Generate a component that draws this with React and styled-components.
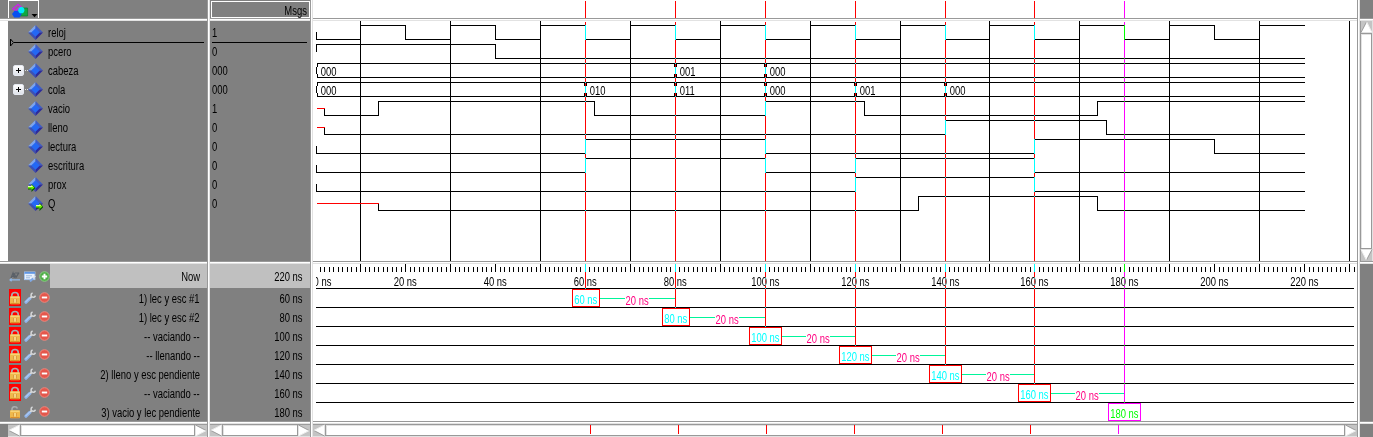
import React from "react";
import styled, { createGlobalStyle, css } from "styled-components";

const GlobalStyle = createGlobalStyle`
  body { margin: 0; background: #fff; }
  * { box-sizing: border-box; }
`;

const FONT = '"Liberation Sans", Arial, sans-serif';
const CONDENSE = 0.755;
const GRAY = "#808080";

/* ---------- layout ---------- */

const Window = styled.main`
  display: grid;
  grid-template-columns: 207px 3px 100px 3px 1044px 3px 13px;
  grid-template-rows: 18px 3px 240px 3px 157px 3px 13px;
  width: 1373px;
  height: 437px;
  overflow: hidden;
  background: #fff;
  color: #000;
  font: 12.5px/19px ${FONT};
  white-space: pre;
`;

const Cell = styled.div`
  grid-column: ${(p) => p.$col};
  grid-row: ${(p) => p.$row};
  min-width: 0;
  min-height: 0;
  overflow: hidden;
  background: ${(p) => (p.$white ? "#fff" : GRAY)};
`;

const sash = (dir) =>
  `linear-gradient(${dir}, #999 0 1px, #fff 1px 2px, #e2e2e2 2px 3px)`;

const HorizontalSash = styled.div`
  grid-column: 1 / -1;
  grid-row: ${(p) => p.$row};
  background: ${sash("to bottom")};
`;

const VerticalSash = styled.div`
  grid-column: ${(p) => p.$col};
  grid-row: 1 / -1;
  background: ${sash("to right")};
`;

const Drawing = styled.svg`
  display: block;
  text { font: 12.5px ${FONT}; }
`;

const Narrow = styled.span`
  display: inline-block;
  transform: scaleX(${CONDENSE});
  transform-origin: ${(p) => (p.$right ? "right" : "left")} center;
`;

/* ---------- header ---------- */

const ToolButton = styled.div`
  width: 31px;
  height: 18px;
  margin-left: 8px;
  border: 1px solid #fff;
  border-bottom: 0;
  svg { display: block; }
`;

const MessageHeader = styled.div`
  height: 17px;
  margin: 1px 0 0 1px;
  padding-right: 2px;
  border: 1px solid #fff;
  line-height: 18px;
  text-align: right;
`;

/* ---------- signal names and values ---------- */

const NameList = styled.div`
  height: 100%;
  padding-top: 2px;
  border-left: 8px solid #fff;
`;

const Signal = styled.div`
  display: flex;
  align-items: center;
  height: 19px;
  line-height: 21px;
`;

const SignalGutter = styled.div`
  display: flex;
  align-items: center;
  width: 20px;
  padding-left: 5px;
`;

const SignalName = styled(Narrow)`
  margin-left: 5px;
  padding-top: 1px;
`;

const SignalValue = styled(Narrow)`
  padding-top: 1px;
`;

const Expander = styled.span`
  display: flex;
  width: 11px;
  height: 11px;
  border: 1px solid #e4e8f0;
  border-radius: 2px;
  background: linear-gradient(#fff, #dfe3ea);
`;

const Connector = styled.span`
  width: 5px;
  height: 1px;
  margin-left: 1px;
  background: repeating-linear-gradient(to right, #ddd 0 1px, transparent 1px 2px);
`;

const ValueList = styled.div`
  padding: 2px 0 0 2px;
`;

const InsertMarker = styled.div`
  height: 0;
  position: relative;
  svg { position: absolute; left: ${(p) => p.$left}px; top: -4px; }
`;

/* ---------- cursor names and times ---------- */

const NowRow = styled.div`
  display: flex;
  align-items: center;
  height: 24px;
`;

const NowLabel = styled.span`
  flex: 1;
  height: 24px;
  padding-right: 7px;
  background: #c0c0c0;
  line-height: 26px;
  text-align: right;
`;

const IconSet = styled.span`
  display: flex;
  align-items: center;
  gap: 3px;
  width: 50px;
  padding-left: 9px;
  svg { flex: none; }
`;

const CursorRow = styled.div`
  display: flex;
  height: 19px;
  line-height: 23px;
`;

const CursorText = styled.span`
  flex: 1;
  padding-right: 7px;
  text-align: right;
`;

const LockCell = styled.span`
  display: flex;
  align-items: center;
  justify-content: center;
  width: 12px;
  height: 17px;
  background: ${(p) => (p.$locked ? "#f00" : "transparent")};
`;

/* ---------- scroll bars ---------- */

const ScrollBar = styled.div`
  display: flex;
  flex-direction: ${(p) => (p.$vertical ? "column" : "row")};
  height: ${(p) => (p.$vertical ? "240px" : "13px")};
  margin-left: ${(p) => p.$indent || 0}px;
  background: #e2e2e2;
  svg { flex: none; display: block; }
`;

const Thumb = styled.div`
  flex: 1;
  background: #fff;
  border: 1px solid #999;
  box-shadow: inset 1px 1px #e2e2e2;
  ${(p) =>
    p.$vertical
      ? css`
          margin-right: 1px;
        `
      : css`
          margin-bottom: 1px;
        `}
`;

/* ---------- data ---------- */

const SIGNALS = [
  { name: "reloj", value: "1" },
  { name: "pcero", value: "0" },
  { name: "cabeza", value: "000", bus: true },
  { name: "cola", value: "000", bus: true },
  { name: "vacio", value: "1" },
  { name: "lleno", value: "0" },
  { name: "lectura", value: "0" },
  { name: "escritura", value: "0" },
  { name: "prox", value: "0", port: "in" },
  { name: "Q", value: "0", port: "out" },
];

const CURSORS = [
  { t: 60, name: "1) lec y esc #1" },
  { t: 80, name: "1) lec y esc #2" },
  { t: 100, name: "-- vaciando --" },
  { t: 120, name: "-- llenando --" },
  { t: 140, name: "2) lleno y esc pendiente" },
  { t: 160, name: "-- vaciando --" },
  { t: 180, name: "3) vacio y lec pendiente", active: true },
];

/* level changes per row: [time, level], level "x" is unknown */
const clock = [[0, 0]];
for (let t = 10; t < 220; t += 10) clock.push([t, (t / 10) % 2]);

const WAVES = [
  [0, clock],
  [1, [[0, 1], [40, 0]]],
  [4, [[0, "x"], [2, 0], [14, 1], [62, 0], [100, 1], [122, 0], [174, 1]]],
  [5, [[0, "x"], [2, 0], [140, 1], [176, 0]]],
  [6, [[0, 0], [60, 1], [100, 0], [160, 1], [200, 0]]],
  [7, [[0, 0], [60, 1], [100, 0], [120, 1], [160, 0]]],
  [8, [[0, 0], [120, 1], [160, 0]]],
  [9, [[0, "x"], [14, 0], [134, 1], [174, 0]]],
];

const BUSES = [
  [2, [[0, "000"], [80, "001"], [100, "000"]]],
  [3, [[0, "000"], [60, "010"], [80, "011"], [100, "000"], [120, "001"], [140, "000"]]],
];

const timeX = (t) => (t === 0 ? 316 : Math.floor(315.8 + 4.4945 * t));
const END_X = timeX(220);

/* ---------- icons ---------- */

function Diamond({ port }) {
  return (
    <svg width="15" height="15" viewBox="0 0 15 15">
      <path d="M7.5 0 0 7.5 7.5 7.5Z" fill="#7da4ee" />
      <path d="M7.5 0 15 7.5H7.5Z" fill="#3f5cc4" />
      <path d="M0 7.5 7.5 15V7.5Z" fill="#3c50b4" />
      <path d="M15 7.5 7.5 15V7.5Z" fill="#2c2a9c" />
      <path d="M7.5 3.2 11.8 7.5 7.5 11.8 3.2 7.5Z" fill="#2468f4" />
      {port && (
        <g transform={port === "in" ? "translate(0 7)" : "translate(8 7)"}>
          <path d="M0 2.5H3.5V0L7.5 4 3.5 8V5.5H0Z" fill="#0a5a00" />
          <path d="M0 2H3.5V.5L6.5 3.5 3.5 6V4.5H0Z" fill="#6cf000" />
          <path d="M0 2H3.5V1L5 2.5 4 3H0Z" fill="#e8ffb0" />
        </g>
      )}
    </svg>
  );
}

const ShapesIcon = () => (
  <svg width="29" height="17" viewBox="9 1 29 17">
    <path d="M13 8.6 18 4.6 20.6 6.6 15.8 10.6Z" fill="#808080" stroke="#c32be0" strokeWidth="1.7" />
    <path d="M23 8H27.6V16H18Z" fill="#10a840" stroke="#0a7a30" strokeWidth=".7" />
    <path d="M12 14 14.5 10.8H19L21.8 14 19.5 17.6H14.2Z" fill="#0850f0" />
    <circle cx="21.3" cy="10.2" r="3.1" fill="#00e8f8" />
    <path d="M31.5 14H37.5L34.5 17.2Z" fill="#000" />
  </svg>
);

const PlusGlyph = () => (
  <svg width="9" height="9" viewBox="0 0 9 9" shapeRendering="crispEdges">
    <path d="M2 4.5H7M4.5 2V7" stroke="#000" />
  </svg>
);

const Lock = ({ open }) => (
  <svg width="12" height="14" viewBox="0 0 12 14">
    <path
      d={open ? "M3 6.5V4.2C3 1.2 7.6 1 8.4 3.6" : "M2.8 6V4.2C2.8 .6 9.2 .6 9.2 4.2V6"}
      fill="none"
      stroke="#a9adb0"
      strokeWidth="1.6"
    />
    <rect x="1" y="5.2" width="10" height="8" rx=".8" fill="#efb84c" />
    <path d="M1.5 6.2H10.5" stroke="#fbe08c" />
    <path d="M1.5 12.6H10.5" stroke="#d98a28" />
    <path d="M4.5 8V11.5M7.5 8V11.5" stroke="#d99a3c" strokeWidth=".9" />
    <path d="M6 8V11.5" stroke="#fbe6a8" strokeWidth="1.2" />
  </svg>
);

const Wrench = () => (
  <svg width="12" height="12" viewBox="0 0 12 12">
    <path d="M2 10.2 5.8 6.4" stroke="#8fb4ea" strokeWidth="3.2" strokeLinecap="round" />
    <path d="M2 9.6 5.4 6.2" stroke="#bcd4f8" strokeWidth="1" strokeLinecap="round" />
    <path d="M6.3 5.8 7.6 4.6" stroke="#dcdcdc" strokeWidth="1.8" />
    <path d="M8.6 .9C6.6 1.6 6.6 4.6 8.4 5.1 9.8 5.5 11.2 4.8 11.3 3.6" fill="none" stroke="#d4d6d8" strokeWidth="1.6" />
  </svg>
);

const RoundBadge = ({ plus }) => (
  <svg width="11" height="11" viewBox="0 0 11 11">
    <circle cx="5.5" cy="5.5" r="4.8" fill={plus ? "#4fae48" : "#e4574c"} stroke={plus ? "#8cd084" : "#f08a80"} strokeWidth=".9" />
    <path d={plus ? "M2.8 5.5H8.2M5.5 2.8V8.2" : "M2.8 5.5H8.2"} stroke="#fff" strokeWidth="1.9" />
  </svg>
);

const SortIcon = () => (
  <svg width="12" height="11" viewBox="0 0 12 11">
    <path d="M2 7.2 4 2 5.4 7.2M5 2 7 6.4 10 1.6M6 2H9.6M2.8 5.4H8" fill="none" stroke="#5a6068" strokeWidth="1.2" />
    <path d="M1 8.9H11M2.6 7.4 1 8.9 2.6 10.3" fill="none" stroke="#8fb7e8" strokeWidth="1.2" />
  </svg>
);

const SheetIcon = () => (
  <svg width="12" height="11" viewBox="0 0 12 11">
    <rect x=".5" y="1" width="10.4" height="7.6" fill="#e8f1fc" stroke="#a8c6ee" />
    <path d="M.5 1.9H11" stroke="#5f96e4" strokeWidth="1.8" />
    <path d="M2 4.8H8M2 6.8H6" stroke="#9db8dc" />
    <path d="M6 10.4 9.2 7.2" stroke="#7fa8e4" strokeWidth="2" />
    <path d="M9 7 11.4 5" stroke="#dfe3e8" strokeWidth="1.6" />
  </svg>
);

function ArrowTip({ dir }) {
  const turn = { left: 0, up: 90, right: 180, down: 270 }[dir];
  const vertical = dir === "up" || dir === "down";
  return (
    <svg
      width={vertical ? 13 : 12}
      height={vertical ? 12 : 13}
      viewBox="0 0 13 13"
      preserveAspectRatio="none"
    >
      <rect width="13" height="13" fill="#c4c4c4" />
      <path d={vertical ? "M.5 0V13" : "M0 .5H13"} stroke="#999" />
      <path d={vertical ? "M12.5 0V13" : "M0 12.5H13"} stroke="#e2e2e2" />
      <g transform={`rotate(${turn} 6.5 6.5)`}>
        <path d="M1 6.5 12.5 1V12Z" fill="#fff" />
        <path d="M1 6.5 12.5 12" stroke="#999" />
        <path d="M1 6.3 12.5 1" stroke="#eee" />
      </g>
    </svg>
  );
}

/* ---------- drawings ---------- */

function Label({ x, y, fill = "#000", children }) {
  return (
    <text transform={`translate(${x} ${y}) scale(${CONDENSE} 1)`} fill={fill} stroke="none">
      {children}
    </text>
  );
}

/* Cursor lines invert whatever they cross. */
function CursorLine({ x, from, to, active }) {
  return (
    <rect
      x={x}
      y={from}
      width="1"
      height={to - from}
      fill={active ? "#0f0" : "#0ff"}
      style={{ mixBlendMode: "difference" }}
    />
  );
}

function wavePath(row, steps) {
  const level = (v) => (v === "x" ? 32 : v ? 25 : 39) + 19 * row + 0.5;
  let known = "";
  let unknown = "";
  steps.forEach(([t, v], i) => {
    const x = timeX(t) + 0.5;
    const next = i + 1 < steps.length ? timeX(steps[i + 1][0]) + 0.5 : END_X + 0.5;
    const y = level(v);
    if (v === "x") {
      unknown += `M${x + 0.5} ${y}H${next}`;
      return;
    }
    const prev = i ? level(steps[i - 1][1]) : level("x");
    known += `M${x} ${Math.min(prev, y) - 0.5}V${Math.max(prev, y) + 0.5}M${x - 0.5} ${y}H${next + 0.5}`;
  });
  return { known, unknown };
}

function Bus({ row, steps }) {
  const top = 63 + 19 * (row - 2);
  const bottom = top + 14;
  return (
    <>
      <path d={`M317 ${top + 0.5}H${END_X + 1}M317 ${bottom + 0.5}H${END_X + 1}`} />
      {steps.map(([t, v]) => {
        const x = timeX(t);
        return (
          <g key={t}>
            <path
              d={
                t === 0
                  ? `M317.5 ${top}V${top + 4}M317.5 ${top + 11}V${top + 15}M316.5 ${top + 4}V${top + 11}`
                  : `M${x - 0.5} ${top}V${top + 4}M${x + 1.5} ${top}V${top + 4}M${x - 0.5} ${top + 11}V${top + 15}M${x + 1.5} ${top + 11}V${top + 15}M${x + 0.5} ${top + 4}V${top + 11}`
              }
            />
            <Label x={x + 4.7} y={top + 13}>{v}</Label>
          </g>
        );
      })}
    </>
  );
}

function HeaderDrawing() {
  return (
    <Drawing width="1044" height="18" viewBox="313 0 1044 18" shapeRendering="crispEdges">
      {CURSORS.map((c) => (
        <rect key={c.t} x={timeX(c.t)} y="1" width="1" height="17" fill={c.active ? "#f0f" : "#f00"} />
      ))}
    </Drawing>
  );
}

function WaveDrawing() {
  const grid = [];
  for (let t = 10; t <= 230; t += 20) grid.push(`M${timeX(t) + 0.5} 21V261`);
  const paths = WAVES.map(([row, steps]) => wavePath(row, steps));
  return (
    <Drawing width="1044" height="240" viewBox="313 21 1044 240" shapeRendering="crispEdges">
      <rect x="313" y="21" width="1044" height="240" fill="#fff" />
      <g fill="none" stroke="#000">
        <path d={grid.join("")} />
        {paths.map((p, i) => <path key={i} d={p.known} />)}
        {BUSES.map(([row, steps]) => <Bus key={row} row={row} steps={steps} />)}
      </g>
      <path d={paths.map((p) => p.unknown).join("")} stroke="#f00" />
      {CURSORS.map((c) => (
        <CursorLine key={c.t} x={timeX(c.t)} from={22} to={261} active={c.active} />
      ))}
    </Drawing>
  );
}

function TimelineDrawing() {
  const ticks = [];
  for (let t = 1; t <= 231; t++) ticks.push(`M${timeX(t) + 0.5} ${t % 10 ? 267 : 264}V272`);
  const labels = [];
  for (let t = 0; t <= 220; t += 20) labels.push(t);
  return (
    <Drawing width="1044" height="157" viewBox="313 264 1044 157" shapeRendering="crispEdges">
      <clipPath id="ruler"><rect x="316" y="264" width="1038" height="157" /></clipPath>
      <rect x="313" y="264" width="1044" height="157" fill="#fff" />
      <path d={ticks.join("")} stroke="#000" />
      <g clipPath="url(#ruler)">
        {labels.map((t) => (
          <Label key={t} x={t ? timeX(t) - (t < 100 ? 11.3 : 13.8) : 313.6} y={286}>{`${t} ns`}</Label>
        ))}
      </g>
      {CURSORS.map((c, i) => (
        <path key={c.t} d={`M316 ${288.5 + 19 * i}H1354`} stroke="#000" />
      ))}
      {CURSORS.map((c, i) => (
        <CursorLine key={c.t} x={timeX(c.t)} from={264} to={289 + 19 * i} active={c.active} />
      ))}
      {CURSORS.map((c, i) => {
        const x = timeX(c.t);
        const left = x - (c.t < 100 ? 13 : 16);
        const width = c.t < 100 ? 28 : 33;
        const y = 289 + 19 * i;
        const right = left + width;
        const next = CURSORS[i + 1] && timeX(CURSORS[i + 1].t);
        const mid = Math.floor((right + next) / 2);
        return (
          <g key={c.t}>
            <rect x={left + 0.5} y={y + 0.5} width={width - 1} height="17" fill="#fff" stroke={c.active ? "#f0f" : "#f00"} />
            <Label x={left + 2.2} y={y + 15} fill={c.active ? "#0f0" : "#0ff"}>{`${c.t} ns`}</Label>
            {next && (
              <>
                <path d={`M${right} ${y + 9.5}H${mid - 12}M${mid + 12} ${y + 9.5}H${next}`} stroke="#00f59a" />
                <Label x={mid - 11.4} y={y + 16} fill="#ff0080">20 ns</Label>
              </>
            )}
          </g>
        );
      })}
    </Drawing>
  );
}

const OverviewMarks = () => (
  <Drawing width="1018" height="9" viewBox="326 426 1018 9" shapeRendering="crispEdges">
    {CURSORS.map((c, i) => (
      <rect key={c.t} x={590 + 88 * i} y="426" width="1" height="9" fill={c.active ? "#f0f" : "#f00"} />
    ))}
  </Drawing>
);

function HorizontalScroll({ indent, children }) {
  return (
    <ScrollBar $indent={indent}>
      <ArrowTip dir="left" />
      <Thumb>{children}</Thumb>
      <ArrowTip dir="right" />
    </ScrollBar>
  );
}

/* ---------- panels ---------- */

function NamePanel() {
  return (
    <NameList>
      {SIGNALS.map((s, i) => (
        <React.Fragment key={s.name}>
          {i === 1 && (
            <InsertMarker $left={2}>
              <svg width="195" height="9" viewBox="0 0 195 9">
                <path d="M.5 1 3.5 4.5.5 8Z" fill="none" stroke="#000" />
                <path d="M4 4.5H194" stroke="#000" />
              </svg>
            </InsertMarker>
          )}
          <Signal>
            <SignalGutter>
              {s.bus && (
                <>
                  <Expander><PlusGlyph /></Expander>
                  <Connector />
                </>
              )}
            </SignalGutter>
            <Diamond port={s.port} />
            <SignalName>{s.name}</SignalName>
          </Signal>
        </React.Fragment>
      ))}
    </NameList>
  );
}

function ValuePanel() {
  return (
    <ValueList>
      {SIGNALS.map((s, i) => (
        <React.Fragment key={s.name}>
          {i === 1 && (
            <InsertMarker $left={0}>
              <svg width="95" height="9"><path d="M0 4.5H95" stroke="#000" /></svg>
            </InsertMarker>
          )}
          <Signal><SignalValue>{s.value}</SignalValue></Signal>
        </React.Fragment>
      ))}
    </ValueList>
  );
}

function CursorNamePanel() {
  return (
    <>
      <NowRow>
        <IconSet><SortIcon /><SheetIcon /><RoundBadge plus /></IconSet>
        <NowLabel><Narrow $right>Now</Narrow></NowLabel>
      </NowRow>
      {CURSORS.map((c) => (
        <CursorRow key={c.t}>
          <IconSet>
            <LockCell $locked={!c.active}><Lock open={c.active} /></LockCell>
            <Wrench />
            <RoundBadge />
          </IconSet>
          <CursorText><Narrow $right>{c.name}</Narrow></CursorText>
        </CursorRow>
      ))}
    </>
  );
}

function CursorTimePanel() {
  return (
    <>
      <NowRow><NowLabel><Narrow $right>220 ns</Narrow></NowLabel></NowRow>
      {CURSORS.map((c) => (
        <CursorRow key={c.t}><CursorText><Narrow $right>{`${c.t} ns`}</Narrow></CursorText></CursorRow>
      ))}
    </>
  );
}

export default function App() {
  return (
    <>
      <GlobalStyle />
      <Window>
        <Cell $col={1} $row={1}><ToolButton><ShapesIcon /></ToolButton></Cell>
        <Cell $col={3} $row={1}><MessageHeader><Narrow $right>Msgs</Narrow></MessageHeader></Cell>
        <Cell $col={5} $row={1} $white><HeaderDrawing /></Cell>
        <Cell $col={7} $row={1} />

        <Cell $col={1} $row={3}><NamePanel /></Cell>
        <Cell $col={3} $row={3}><ValuePanel /></Cell>
        <Cell $col={5} $row={3} $white><WaveDrawing /></Cell>
        <Cell $col={7} $row={3}>
          <ScrollBar $vertical>
            <ArrowTip dir="up" />
            <Thumb $vertical />
            <ArrowTip dir="down" />
          </ScrollBar>
        </Cell>

        <Cell $col={1} $row={5}><CursorNamePanel /></Cell>
        <Cell $col={3} $row={5}><CursorTimePanel /></Cell>
        <Cell $col={5} $row={5} $white><TimelineDrawing /></Cell>
        <Cell $col={7} $row={5} />

        <Cell $col={1} $row={7}><HorizontalScroll indent={8} /></Cell>
        <Cell $col={3} $row={7}><HorizontalScroll /></Cell>
        <Cell $col={5} $row={7}><HorizontalScroll><OverviewMarks /></HorizontalScroll></Cell>
        <Cell $col={7} $row={7} />

        <HorizontalSash $row={2} />
        <HorizontalSash $row={4} />
        <HorizontalSash $row={6} />
        <VerticalSash $col={2} />
        <VerticalSash $col={4} />
        <VerticalSash $col={6} />
      </Window>
    </>
  );
}
